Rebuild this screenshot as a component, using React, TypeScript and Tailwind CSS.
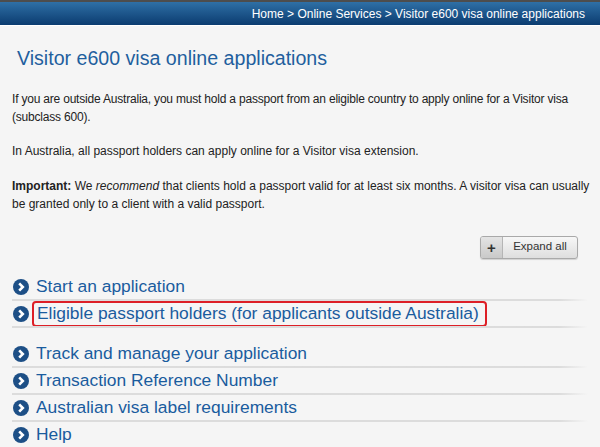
import React from "react";

function Chevron() {
  return (
    <svg width="16" height="16" viewBox="0 0 16 16" className="shrink-0">
      <circle cx="8" cy="8" r="8" fill="#1d4f86" />
      <path d="M6.2 4.4 L9.8 8 L6.2 11.6" stroke="#fff" strokeWidth="2.6" fill="none" strokeLinecap="butt" strokeLinejoin="miter" />
    </svg>
  );
}

function Row({ label, boxed, last }: { label: string; boxed?: boolean; last?: boolean }) {
  return (
    <div className="relative flex items-center h-[27px] pl-[1px]">
      <Chevron />
      <div
        className={
          boxed
            ? "ml-[3px] flex items-center h-[26px] pl-[3px] pr-[6px] border-2 border-[#dd1f26] rounded-[4px]"
            : "ml-[7px]"
        }
      >
        <span className="text-[17.4px] leading-none text-[#1a5c9e] whitespace-nowrap">{label}</span>
      </div>
      {!last && (
        <div className="absolute left-0 right-0 bottom-0 h-[2px] bg-gradient-to-r from-[#dcdcdc] via-[#dcdcdc] via-95% to-[#f5f5f5]" />
      )}
    </div>
  );
}

export default function App() {
  return (
    <div
      className="w-[600px] h-[447px] overflow-hidden bg-[#f5f5f5] text-[#222]"
      style={{ fontFamily: '"Liberation Sans", Arial, sans-serif' }}
    >
      <div className="h-[2px] bg-[#4d4d4d]" />
      <div className="h-[23px] bg-gradient-to-b from-[#2f70a6] to-[#0b3c70] flex items-center justify-end pr-[15px]">
        <span className="text-[12px] text-white leading-none whitespace-nowrap">
          Home &gt; Online Services &gt; Visitor e600 visa online applications
        </span>
      </div>
      <div className="h-[1px] bg-[#ffffff]" />

      <div className="pl-[17px] pt-[23px]">
        <h1 className="text-[19.6px] leading-none text-[#1f5f9e]">Visitor e600 visa online applications</h1>
      </div>

      <div className="pl-[12px] pr-[8px] pt-[21px] text-[12px] leading-[18px]">
        <p className="tracking-[-0.2px]">
          If you are outside Australia, you must hold a passport from an eligible country to apply online for a Visitor visa
          (subclass 600).
        </p>
        <p className="mt-[16px]">In Australia, all passport holders can apply online for a Visitor visa extension.</p>
        <p className="mt-[17px]">
          <b>Important:</b> We <i>recommend</i> that clients hold a passport valid for at least six months. A visitor visa can usually
          be granted only to a client with a valid passport.
        </p>
      </div>

      <div className="flex justify-end pr-[22px] mt-[23px]">
        <button className="flex h-[23px] w-[98px] rounded-[3px] border border-[#a9a9a9] bg-gradient-to-b from-[#f7f7f7] to-[#dedede] shadow-[0_1px_1px_rgba(0,0,0,0.15)] overflow-hidden">
          <span className="w-[22px] h-full flex items-center justify-center border-r border-[#b5b5b5] bg-gradient-to-b from-[#e4e4e4] to-[#c9c9c9] text-[15px] leading-none text-[#333] font-bold">
            +
          </span>
          <span className="flex-1 h-full flex items-center justify-center text-[11.5px] text-[#333]">Expand all</span>
        </button>
      </div>

      <div className="pl-[12px] pr-[12px] mt-[15px]">
        <Row label="Start an application" />
        <Row label="Eligible passport holders (for applicants outside Australia)" boxed />
        <div className="h-[13px]" />
        <Row label="Track and manage your application" />
        <Row label="Transaction Reference Number" />
        <Row label="Australian visa label requirements" />
        <Row label="Help" last />
      </div>
    </div>
  );
}
